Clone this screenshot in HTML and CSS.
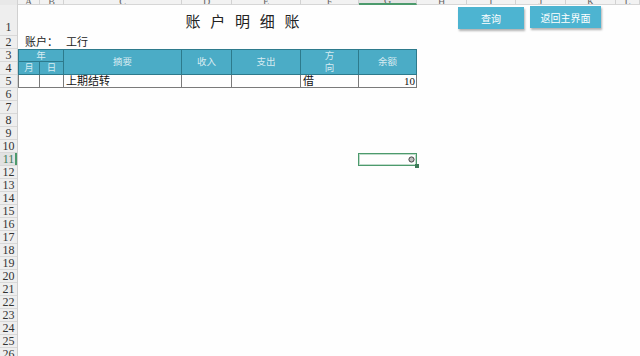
FILE: index.html
```html
<!DOCTYPE html>
<html lang="zh-CN">
<head>
    <meta charset="UTF-8">
    <title>账户明细账</title>
    <link rel="stylesheet" href="styles.css">
</head>
<body>
    <div class="sheet">
        <div class="colbar">
            <div class="corner"></div>
            <div class="col w-a"><span>A</span></div>
            <div class="col w-b"><span>B</span></div>
            <div class="col w-c"><span>C</span></div>
            <div class="col w-d"><span>D</span></div>
            <div class="col w-e"><span>E</span></div>
            <div class="col w-f"><span>F</span></div>
            <div class="col w-g active"><span>G</span></div>
            <div class="col w-h"><span>H</span></div>
            <div class="col w-i"><span>I</span></div>
            <div class="col w-j"><span>J</span></div>
            <div class="col w-k"><span>K</span></div>
            <div class="col w-rest"><span>L</span></div>
        </div>

        <div class="body">
            <div class="rowbar">
                <div class="rownum tall">1</div>
                <div class="rownum">2</div>
                <div class="rownum">3</div>
                <div class="rownum">4</div>
                <div class="rownum">5</div>
                <div class="rownum">6</div>
                <div class="rownum">7</div>
                <div class="rownum">8</div>
                <div class="rownum">9</div>
                <div class="rownum">10</div>
                <div class="rownum active">11</div>
                <div class="rownum">12</div>
                <div class="rownum">13</div>
                <div class="rownum">14</div>
                <div class="rownum">15</div>
                <div class="rownum">16</div>
                <div class="rownum">17</div>
                <div class="rownum">18</div>
                <div class="rownum">19</div>
                <div class="rownum">20</div>
                <div class="rownum">21</div>
                <div class="rownum">22</div>
                <div class="rownum">23</div>
                <div class="rownum">24</div>
                <div class="rownum">25</div>
                <div class="rownum">26</div>
            </div>

            <div class="cells">
                <div class="title">账 户 明 细 账</div>

                <div class="acct-label">账户：</div>
                <div class="acct-name">工行</div>

                <!-- table header, rows 3-4 -->
                <div class="th first top th-year">年</div>
                <div class="th first th-month">月</div>
                <div class="th th-day">日</div>
                <div class="th top tall th-desc">摘要</div>
                <div class="th top tall th-in">收入</div>
                <div class="th top tall th-out">支出</div>
                <div class="th top tall th-dir">方<br>向</div>
                <div class="th top tall th-bal">余额</div>

                <!-- row 5 -->
                <div class="td first c-a"></div>
                <div class="td c-b"></div>
                <div class="td c-c">上期结转</div>
                <div class="td c-d"></div>
                <div class="td c-e"></div>
                <div class="td c-f">借</div>
                <div class="td num c-g">10</div>

                <div class="selected">
                    <svg class="cursor" width="7" height="7" viewBox="0 0 7 7">
                        <circle cx="3.5" cy="3.5" r="2.6" fill="#bdbdbd" stroke="#444" stroke-width="1"/>
                    </svg>
                    <span class="handle"></span>
                </div>
            </div>
        </div>

        <button class="btn btn-query">查询</button>
        <button class="btn btn-back">返回主界面</button>
    </div>
</body>
</html>
```

FILE: styles.css
```css
body {
    margin: 0;
    padding: 0;
    background: #fff;
    font-family: 'Liberation Serif', 'Noto Sans CJK SC', serif;
    color: #222;
    overflow: hidden;
}
.sheet {
    position: relative;
    width: 640px;
    height: 356px;
    overflow: hidden;
    background: #fefefe;
}

/* column letters */
.colbar {
    display: flex;
    height: 5px;
    background: #f2f2f2;
}
.corner {
    width: 18px;
    flex: none;
    border-right: 1px solid #d2d2d2;
    box-sizing: border-box;
    background: #e8e8e8;
}
.col {
    flex: none;
    display: flex;
    justify-content: center;
    align-items: flex-end;
    overflow: hidden;
    border-right: 1px solid #d2d2d2;
    border-bottom: 1px solid #d6d6d6;
    box-sizing: border-box;
    font-size: 10px;
    color: #666;
}
.col span {
    line-height: 9px;
    margin-bottom: -2px;
}
.col.active {
    background: #e3e3e3;
    border-bottom: 2px solid #4c9a6c;
}
.w-a { width: 22px; }
.w-b { width: 24px; }
.w-c { width: 118px; }
.w-d { width: 50px; }
.w-e { width: 69px; }
.w-f { width: 58px; }
.w-g { width: 58px; }
.w-h { width: 50px; }
.w-i { width: 49px; }
.w-j { width: 50px; }
.w-k { width: 50px; }
.w-rest { flex: 1; }

/* rows */
.body {
    display: flex;
}
.rowbar {
    width: 18px;
    flex: none;
    display: flex;
    flex-direction: column;
    background: #eeeeee;
    border-right: 1px solid #d0d0d0;
    box-sizing: border-box;
}
.rownum {
    height: 13px;
    flex: none;
    box-sizing: border-box;
    border-bottom: 1px solid #d8d8d8;
    display: flex;
    justify-content: center;
    align-items: center;
    font-size: 12px;
    color: #333;
    line-height: 1;
}
.rownum.tall {
    height: 31px;
    align-items: flex-end;
    padding-bottom: 2px;
}
.rownum.active {
    background: #e2e2e2;
    color: #3d7a58;
    box-shadow: inset -2px 0 0 #4c9a6c;
}

.cells {
    flex: 1;
    display: grid;
    grid-template-columns: 22px 24px 118px 50px 69px 58px 58px 50px 49px 50px 50px 1fr;
    grid-template-rows: 31px repeat(25, 13px);
    font-size: 11px;
}

.title {
    grid-column: 1 / 9;
    grid-row: 1;
    display: flex;
    justify-content: center;
    align-items: center;
    font-size: 15px;
    letter-spacing: 3px;
    color: #222;
    padding-left: 3px;
}
.acct-label {
    grid-column: 1 / 3;
    grid-row: 2;
    padding-left: 7px;
    white-space: nowrap;
    line-height: 13px;
}
.acct-name {
    grid-column: 3;
    grid-row: 2;
    padding-left: 2px;
    line-height: 13px;
}

/* table header */
.th {
    background: #4bacc6;
    color: rgba(255, 255, 255, 0.78);
    font-size: 9.5px;
    display: flex;
    justify-content: center;
    align-items: center;
    text-align: center;
    line-height: 12px;
    border-right: 1px solid #2d7a8c;
    border-bottom: 1px solid #2d7a8c;
    box-sizing: border-box;
}
.th.first { border-left: 1px solid #2d7a8c; }
.th.top { border-top: 1px solid #2d7a8c; }
.th-year { grid-column: 1 / 3; grid-row: 3; }
.th-month { grid-column: 1; grid-row: 4; }
.th-day { grid-column: 2; grid-row: 4; }
.th-desc { grid-column: 3; grid-row: 3 / 5; }
.th-in { grid-column: 4; grid-row: 3 / 5; }
.th-out { grid-column: 5; grid-row: 3 / 5; }
.th-dir { grid-column: 6; grid-row: 3 / 5; }
.th-bal { grid-column: 7; grid-row: 3 / 5; }

/* data row */
.td {
    grid-row: 5;
    border-right: 1px solid #7a7a7a;
    border-bottom: 1px solid #7a7a7a;
    box-sizing: border-box;
    padding-left: 2px;
    line-height: 12px;
    white-space: nowrap;
    color: #111;
}
.td.first { border-left: 1px solid #7a7a7a; }
.td.num {
    text-align: right;
    padding-left: 0;
    padding-right: 1px;
}
.c-a { grid-column: 1; }
.c-b { grid-column: 2; }
.c-c { grid-column: 3; }
.c-d { grid-column: 4; }
.c-e { grid-column: 5; }
.c-f { grid-column: 6; }
.c-g { grid-column: 7; }

/* active cell G11 */
.selected {
    grid-column: 7;
    grid-row: 11;
    position: relative;
    border: 1px solid #4c9a6c;
    box-shadow: inset 0 0 0 1px rgba(76, 154, 108, 0.35);
    margin-left: -1px;
}
.cursor {
    position: absolute;
    right: 1px;
    top: 2px;
}
.handle {
    position: absolute;
    right: -3px;
    bottom: -3px;
    width: 4px;
    height: 4px;
    background: #3d7a58;
}

/* floating buttons */
.btn {
    position: absolute;
    border: none;
    background: #4db4d1;
    color: #fff;
    font-family: 'Liberation Serif', 'Noto Sans CJK SC', serif;
    font-size: 10px;
    padding: 0;
    box-shadow: 1px 2px 2px rgba(0, 0, 0, 0.3);
    cursor: pointer;
}
.btn-query {
    left: 458px;
    top: 7px;
    width: 66px;
    height: 22px;
}
.btn-back {
    left: 530px;
    top: 6px;
    width: 71px;
    height: 22px;
}
```
